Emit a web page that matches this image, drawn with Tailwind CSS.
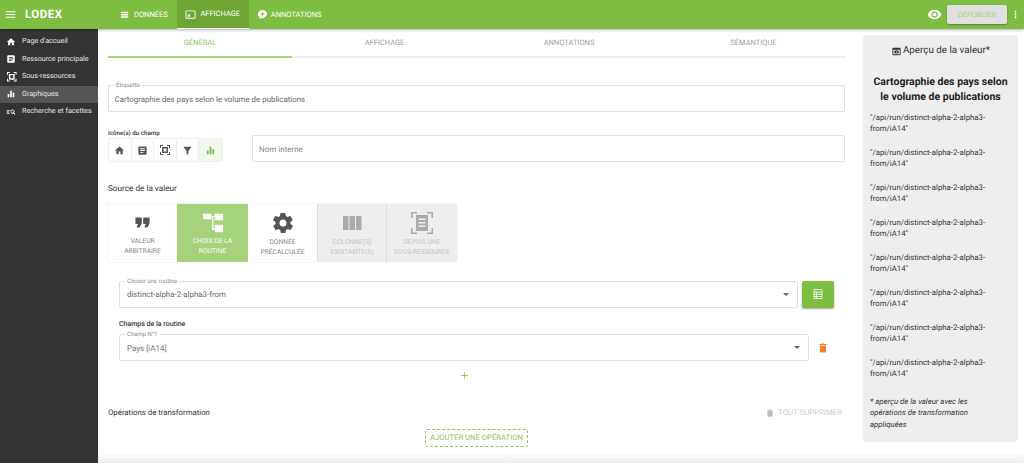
<!DOCTYPE html>
<html lang="fr">
<head>
  <meta charset="UTF-8" />
  <title>Lodex</title>
  <script src="https://cdn.jsdelivr.net/npm/@tailwindcss/browser@4"></script>
</head>
<body class="h-[463px] w-[1024px] overflow-hidden bg-white font-['Roboto',sans-serif] text-[#444] [text-rendering:geometricPrecision]">
  <!-- barre du haut -->
  <header class="relative z-10 flex h-[29px] items-center bg-[#7dbd42] text-white shadow-[0_1px_3px_rgba(0,0,0,0.3)]">
    <svg class="ml-[4px] h-[13px] w-[13px]" viewBox="0 0 24 24" fill="currentColor"><path d="M3 18h18v-2H3v2zm0-5h18v-2H3v2zm0-7v2h18V6H3z"/></svg>
    <span class="ml-[8px] w-[84px] text-[11.5px] font-bold tracking-[0.5px]">LODEX</span>
    <div class="flex h-[29px] items-center gap-[4px] pr-[9px] pl-[10px] text-[7.5px]">
      <svg class="h-[11px] w-[11px]" viewBox="0 0 24 24" fill="currentColor"><path d="M4 14h16v-3H4v3zm0 5h16v-3H4v3zM4 6v3h16V6H4z"/></svg>
      DONNÉES
    </div>
    <div class="flex h-[29px] w-[72px] items-center justify-center gap-[4px] border-b border-white bg-[#6ea636] text-[7.5px]">
      <svg class="h-[11px] w-[11px]" viewBox="0 0 24 24" fill="currentColor"><path d="M21 3H3c-1.100 0-2 .9-2 2v14c0 1.100.9 2 2 2h18c1.100 0 2-.9 2-2V5c0-1.100-.9-2-2-2zm0 16H3V5h18v14zM5 17h6v-6H9v3.500L6.500 12 5 13.500 7.500 16H5v1z"/></svg>
      AFFICHAGE
    </div>
    <div class="flex h-[29px] items-center gap-[3px] pl-[8px] text-[7.5px]">
      <svg class="h-[11px] w-[11px]" viewBox="0 0 24 24" fill="currentColor"><path d="M12 2C6.500 2 2 6 2 11c0 2.600 1.200 4.900 3.200 6.500L4 22l5-2.400c1 .3 2 .4 3 .4 5.500 0 10-4 10-9s-4.500-9-10-9zm0 12a3 3 0 1 1 0-6 3 3 0 0 1 0 6z"/></svg>
      ANNOTATIONS
    </div>
    <div class="ml-auto flex items-center">
      <svg class="mr-[5px] h-[15px] w-[15px]" viewBox="0 0 24 24" fill="currentColor"><path d="M12 4.500C7 4.500 2.700 7.600 1 12c1.700 4.400 6 7.500 11 7.500s9.300-3.100 11-7.500c-1.700-4.400-6-7.500-11-7.500zM12 17a5 5 0 1 1 0-10 5 5 0 0 1 0 10zm0-8a3 3 0 1 0 0 6 3 3 0 0 0 0-6z"/></svg>
      <div class="flex h-[19px] w-[60px] items-center justify-center rounded-[2px] bg-[#e0e0e0] text-[7.5px] text-[#a5d27a] shadow-[0_1px_2px_rgba(0,0,0,0.3)]">DÉPUBLIER</div>
      <svg class="mx-[3px] h-[13px] w-[11px]" viewBox="0 0 24 24" fill="currentColor"><path d="M12 8a2 2 0 1 0 0-4 2 2 0 0 0 0 4zm0 2a2 2 0 1 0 0 4 2 2 0 0 0 0-4zm0 6a2 2 0 1 0 0 4 2 2 0 0 0 0-4z"/></svg>
    </div>
  </header>

  <div class="flex h-[434px]">
    <!-- menu gauche -->
    <nav class="w-[98px] shrink-0 bg-[#333] pt-[4px] text-[7.2px] text-[#e6e6e6]">
      <div class="flex h-[17.500px] items-center gap-[6px] pl-[6px]">
        <svg class="h-[10px] w-[10px] shrink-0" viewBox="0 0 24 24" fill="white"><path d="M10 20v-6h4v6h5v-8h3L12 3 2 12h3v8z"/></svg>Page d'accueil
      </div>
      <div class="flex h-[17.500px] items-center gap-[6px] pl-[6px]">
        <svg class="h-[10px] w-[10px] shrink-0" viewBox="0 0 24 24" fill="white"><path d="M19 3H5c-1.100 0-2 .9-2 2v14c0 1.100.9 2 2 2h14c1.100 0 2-.9 2-2V5c0-1.100-.9-2-2-2zm-5 14H7v-2h7v2zm3-4H7v-2h10v2zm0-4H7V7h10v2z"/></svg>Ressource principale
      </div>
      <div class="flex h-[17.500px] items-center gap-[5px] pl-[5.500px]">
        <svg class="h-[11.500px] w-[11.500px] shrink-0" viewBox="0 0 24 24" fill="white"><path d="M2 2h6v2H4v4H2V2zm14 0h6v6h-2V4h-4V2zM2 16h2v4h4v2H2v-6zm18 0h2v6h-6v-2h4v-4zM6 6h12v12H6V6zm3 3v6h6V9H9z"/></svg>Sous-ressources
      </div>
      <div class="flex h-[17.500px] items-center gap-[6px] bg-[#555] pl-[6px]">
        <svg class="h-[10px] w-[10px] shrink-0" viewBox="0 0 24 24" fill="white"><path d="M4 12h4v8H4zM10 4h4v16h-4zM16 9h4v11h-4z"/></svg>Graphiques
      </div>
      <div class="flex h-[17.500px] items-center gap-[6px] pl-[6px]">
        <svg class="h-[10px] w-[10px] shrink-0" viewBox="0 0 24 24" fill="white"><path d="M2 7h7v2H2zm0 4h5v2H2zm0 4h7v2H2zm13.500-9a5 5 0 0 1 4 8l3 3-1.500 1.500-3-3a5 5 0 1 1-2.500-9.500zm0 2a3 3 0 1 0 0 6 3 3 0 0 0 0-6z"/></svg>Recherche et facettes
      </div>
    </nav>

    <!-- formulaire -->
    <main class="relative flex-1 pl-[10px]">
      <div class="w-[738px]">
        <div class="flex h-[29px] border-b-2 border-[#f2f2f2] text-[7.5px] text-[#9e9e9e]">
          <div class="-mb-[2px] flex w-[184px] items-center justify-center border-b-2 border-[#a5d27a] text-[#8cc65a]">GÉNÉRAL</div>
          <div class="flex w-[185px] items-center justify-center">AFFICHAGE</div>
          <div class="flex w-[184px] items-center justify-center">ANNOTATIONS</div>
          <div class="flex w-[185px] items-center justify-center">SÉMANTIQUE</div>
        </div>

        <div class="relative mt-[27px] flex h-[27px] w-[737px] items-center rounded-[2px] border border-[#e0e0e0] pt-[2px] pl-[5.500px] text-[7.900px] text-[#666]">
          <span class="absolute -top-[5px] left-[5px] bg-white px-[2px] text-[6px] text-[#888]">Étiquette</span>
          Cartographie des pays selon le volume de publications
        </div>

        <div class="mt-[17px] flex items-end">
          <div class="w-[144px]">
            <div class="text-[6.200px] font-medium text-[#333]">Icône(s) du champ</div>
            <div class="flex h-[24px] w-[115px] rounded-[2px] border border-[#eee] text-[#555]">
              <div class="flex w-[23px] items-center justify-center border-r border-[#eee]"><svg class="h-[11px] w-[11px]" viewBox="0 0 24 24" fill="currentColor"><path d="M10 20v-6h4v6h5v-8h3L12 3 2 12h3v8z"/></svg></div>
              <div class="flex w-[23px] items-center justify-center border-r border-[#eee]"><svg class="h-[11px] w-[11px]" viewBox="0 0 24 24" fill="currentColor"><path d="M19 3H5c-1.100 0-2 .9-2 2v14c0 1.100.9 2 2 2h14c1.100 0 2-.9 2-2V5c0-1.100-.9-2-2-2zm-5 14H7v-2h7v2zm3-4H7v-2h10v2zm0-4H7V7h10v2z"/></svg></div>
              <div class="flex w-[23px] items-center justify-center border-r border-[#eee]"><svg class="h-[12px] w-[12px]" viewBox="0 0 24 24" fill="currentColor"><path d="M2 2h6v2H4v4H2V2zm14 0h6v6h-2V4h-4V2zM2 16h2v4h4v2H2v-6zm18 0h2v6h-6v-2h4v-4zM6 6h12v12H6V6zm3 3v6h6V9H9z"/></svg></div>
              <div class="flex w-[23px] items-center justify-center border-r border-[#eee]"><svg class="h-[11px] w-[11px]" viewBox="0 0 24 24" fill="currentColor"><path d="M3 4h18l-7 9v7h-4v-7z"/></svg></div>
              <div class="flex w-[23px] items-center justify-center bg-[#f3f8ee] text-[#7dbd42]"><svg class="h-[11px] w-[11px]" viewBox="0 0 24 24" fill="currentColor"><path d="M4 12h4v8H4zM10 4h4v16h-4zM16 9h4v11h-4z"/></svg></div>
            </div>
          </div>
          <div class="flex h-[27px] w-[593px] items-center rounded-[2px] border border-[#e0e0e0] pt-[2px] pl-[6px] text-[8px] text-[#888]">Nom interne</div>
        </div>

        <div class="mt-[21px] text-[8.200px] text-[#333]">Source de la valeur</div>

        <div class="mt-[8px] flex h-[58px] w-[349px] rounded-[2px] shadow-[0_0_1px_rgba(0,0,0,0.35)]">
          <div class="flex w-[69px] flex-col items-center pt-[10px] text-center text-[6.700px] leading-[10px] text-[#888]">
            <svg class="mb-[5px] h-[17px] w-[17px] text-[#555]" viewBox="0 0 24 24" fill="currentColor"><path d="M2 5h9v8l-3 6H3.500l2-5H2zM13 5h9v8l-3 6h-4.500l2-5H13z"/></svg>
            VALEUR<br />ARBITRAIRE
          </div>
          <div class="flex w-[71px] flex-col items-center bg-[#a5d27a] pt-[8px] text-center text-[6.700px] leading-[10px] text-white">
            <svg class="mb-[2px] h-[22px] w-[22px]" viewBox="0 0 24 24" fill="currentColor"><path d="M1 2h9v6H1zM14 2h9v7h-9zM14 14h9v8h-9zM10 4h4v1.500h-4zM11 5h1.500v13H14v1.500h-3z"/></svg>
            CHOIX DE LA<br />ROUTINE
          </div>
          <div class="flex w-[69px] flex-col items-center pt-[7px] text-center text-[6.700px] leading-[10px] text-[#888]">
            <svg class="mb-[2px] h-[24px] w-[24px] text-[#555]" viewBox="0 0 24 24" fill="currentColor"><path d="M19.400 13c0-.3.100-.7.100-1s0-.7-.1-1l2.100-1.600c.2-.2.200-.4.100-.6l-2-3.500c-.1-.2-.4-.3-.6-.2l-2.500 1c-.5-.4-1.100-.7-1.700-1l-.4-2.600c0-.3-.2-.5-.5-.5h-4c-.3 0-.5.200-.5.400l-.4 2.700c-.6.200-1.200.6-1.700 1l-2.500-1c-.2-.1-.5 0-.6.200l-2 3.500c-.1.200-.1.400.1.600L4.600 11c0 .3-.1.700-.1 1s0 .7.100 1l-2.100 1.600c-.2.200-.2.400-.1.600l2 3.500c.1.200.4.300.6.200l2.500-1c.5.400 1.100.7 1.700 1l.4 2.600c0 .3.200.5.500.5h4c.3 0 .5-.2.500-.4l.4-2.700c.6-.2 1.200-.6 1.700-1l2.500 1c.2.1.5 0 .6-.2l2-3.500c.1-.2.100-.4-.1-.6L19.400 13zM12 15.500a3.500 3.500 0 1 1 0-7 3.500 3.500 0 0 1 0 7z"/></svg>
            DONNÉE<br />PRÉCALCULÉE
          </div>
          <div class="flex w-[70px] flex-col items-center border-x border-[#ddd] bg-[#eee] pt-[7px] text-center text-[6.700px] leading-[10px] text-[#c4c4c4]">
            <svg class="mb-[2px] h-[24px] w-[24px] text-[#aaa]" viewBox="0 0 24 24" fill="currentColor"><path d="M3 5h5.500v14H3zM9.500 5h5.500v14H9.500zM16 5h5.500v14H16z"/></svg>
            COLONNE(S)<br />EXISTANTE(S)
          </div>
          <div class="flex w-[70px] flex-col items-center bg-[#eee] pt-[7px] text-center text-[6.700px] leading-[10px] text-[#c4c4c4]">
            <svg class="mb-[2px] h-[24px] w-[24px] text-[#aaa]" viewBox="0 0 24 24" fill="currentColor"><path d="M1 1h6v1.500H2.500V7H1zM17 1h6v6h-1.500V2.500H17zM1 17h1.500v4.500H7V23H1zM21.500 17H23v6h-6v-1.500h4.500zM6 4h12v16H6zm2.500 3.500v1.500h7V7.500zm0 3.500v1.500h7V11zm0 3.500V16h7v-1.500z" fill-rule="evenodd"/></svg>
            DEPUIS UNE<br />SOUS-RESSOURCE
          </div>
        </div>

        <div class="mt-[19px] ml-[11px] flex items-center">
          <div class="relative flex h-[27px] w-[679px] items-center rounded-[2px] border border-[#e0e0e0] pt-[2px] pl-[7px] text-[7.900px] text-[#666]">
            <span class="absolute -top-[5px] left-[5px] bg-white px-[2px] text-[6px] text-[#888]">Choisir une routine</span>
            distinct-alpha-2-alpha3-from
            <span class="absolute top-[11px] right-[8px] h-0 w-0 border-x-[3px] border-t-[3px] border-x-transparent border-t-[#666]"></span>
          </div>
          <div class="ml-[4px] flex h-[27px] w-[32px] items-center justify-center rounded-[2px] bg-[#7dbd42] shadow-[0_1px_2px_rgba(0,0,0,0.35)]">
            <svg class="h-[12px] w-[12px]" viewBox="0 0 24 24" fill="none" stroke="white" stroke-width="1.600"><path d="M4 3h16v18H4zM4 8h16M4 12.500h16M4 17h16M9 8v13"/></svg>
          </div>
        </div>

        <div class="mt-[11px] ml-[11px] text-[7px] font-medium text-[#333]">Champs de la routine</div>

        <div class="mt-[5px] ml-[11px] flex items-center">
          <div class="relative flex h-[27px] w-[690px] items-center rounded-[2px] border border-[#e0e0e0] pt-[2px] pl-[7px] text-[8px] text-[#777]">
            <span class="absolute -top-[5px] left-[5px] bg-white px-[2px] text-[6px] text-[#888]">Champ N°1</span>
            Pays [iA14]
            <span class="absolute top-[11px] right-[8px] h-0 w-0 border-x-[3px] border-t-[3px] border-x-transparent border-t-[#666]"></span>
          </div>
          <svg class="ml-[8px] h-[12px] w-[12px] text-[#f5822a]" viewBox="0 0 24 24" fill="currentColor"><path d="M6 19c0 1.100.9 2 2 2h8c1.100 0 2-.9 2-2V7H6v12zM19 4h-3.500l-1-1h-5l-1 1H5v2h14V4z"/></svg>
        </div>

        <div class="mt-[9px] flex w-[713px] justify-center text-[#8cc65a]">
          <svg class="h-[11px] w-[11px]" viewBox="0 0 24 24" fill="currentColor"><path d="M19 13h-6v6h-2v-6H5v-2h6V5h2v6h6v2z"/></svg>
        </div>

        <div class="mt-[26px] flex items-center justify-between pr-[4px]">
          <span class="text-[7.800px] text-[#333]">Opérations de transformation</span>
          <span class="flex items-center gap-[3px] text-[7.800px] text-[#ccc]">
            <svg class="h-[10px] w-[10px] text-[#bbb]" viewBox="0 0 24 24" fill="currentColor"><path d="M6 19c0 1.100.9 2 2 2h8c1.100 0 2-.9 2-2V7H6v12zM19 4h-3.500l-1-1h-5l-1 1H5v2h14V4z"/></svg>
            TOUT SUPPRIMER
          </span>
        </div>

        <div class="mt-[10px] flex justify-center pr-[1px]">
          <div class="flex h-[18px] w-[103px] items-center justify-center rounded-[2px] border border-dashed border-[#8cc65a] text-[7.700px] text-[#8cc65a]">AJOUTER UNE OPÉRATION</div>
        </div>
      </div>

      <!-- ombre de la barre du bas -->
      <div class="absolute right-0 bottom-0 left-0 h-[10px] bg-gradient-to-b from-white to-[#ececec]"></div>

      <!-- aperçu -->
      <aside class="absolute top-[6px] left-[765px] h-[407px] w-[155px] rounded-[4px] bg-[#eee] px-[7px] text-[#333]">
        <div class="mt-[9px] flex items-center justify-center gap-[1px] text-[9.800px]">
          <svg class="h-[11px] w-[11px]" viewBox="0 0 24 24" fill="currentColor"><path d="M19 4H5a2 2 0 0 0-2 2v12c0 1.100.9 2 2 2h14a2 2 0 0 0 2-2V6a2 2 0 0 0-2-2zm0 14H5V8h14v10zm-7-8.500c-2.500 0-4.500 1.400-5.500 3.500 1 2.100 3 3.500 5.500 3.500s4.500-1.400 5.500-3.500c-1-2.100-3-3.500-5.500-3.500zm0 5a1.500 1.500 0 1 1 0-3 1.500 1.500 0 0 1 0 3z"/></svg>
          Aperçu de la valeur*
        </div>
        <div class="mt-[15px] text-center text-[10.500px] leading-[15px] font-bold text-[#222]">Cartographie des pays selon<br />le volume de publications</div>
        <div class="mt-[8px] space-y-[12px] pr-[16px] text-[7.800px] leading-[11.500px]">
          <p>"/api/run/distinct-alpha-2-alpha3-from/iA14"</p>
          <p>"/api/run/distinct-alpha-2-alpha3-from/iA14"</p>
          <p>"/api/run/distinct-alpha-2-alpha3-from/iA14"</p>
          <p>"/api/run/distinct-alpha-2-alpha3-from/iA14"</p>
          <p>"/api/run/distinct-alpha-2-alpha3-from/iA14"</p>
          <p>"/api/run/distinct-alpha-2-alpha3-from/iA14"</p>
          <p>"/api/run/distinct-alpha-2-alpha3-from/iA14"</p>
          <p>"/api/run/distinct-alpha-2-alpha3-from/iA14"</p>
        </div>
        <p class="mt-[16px] pr-[20px] text-[7.800px] leading-[11.500px] italic">* aperçu de la valeur avec les opérations de transformation appliquées</p>
      </aside>
    </main>
  </div>
</body>
</html>
